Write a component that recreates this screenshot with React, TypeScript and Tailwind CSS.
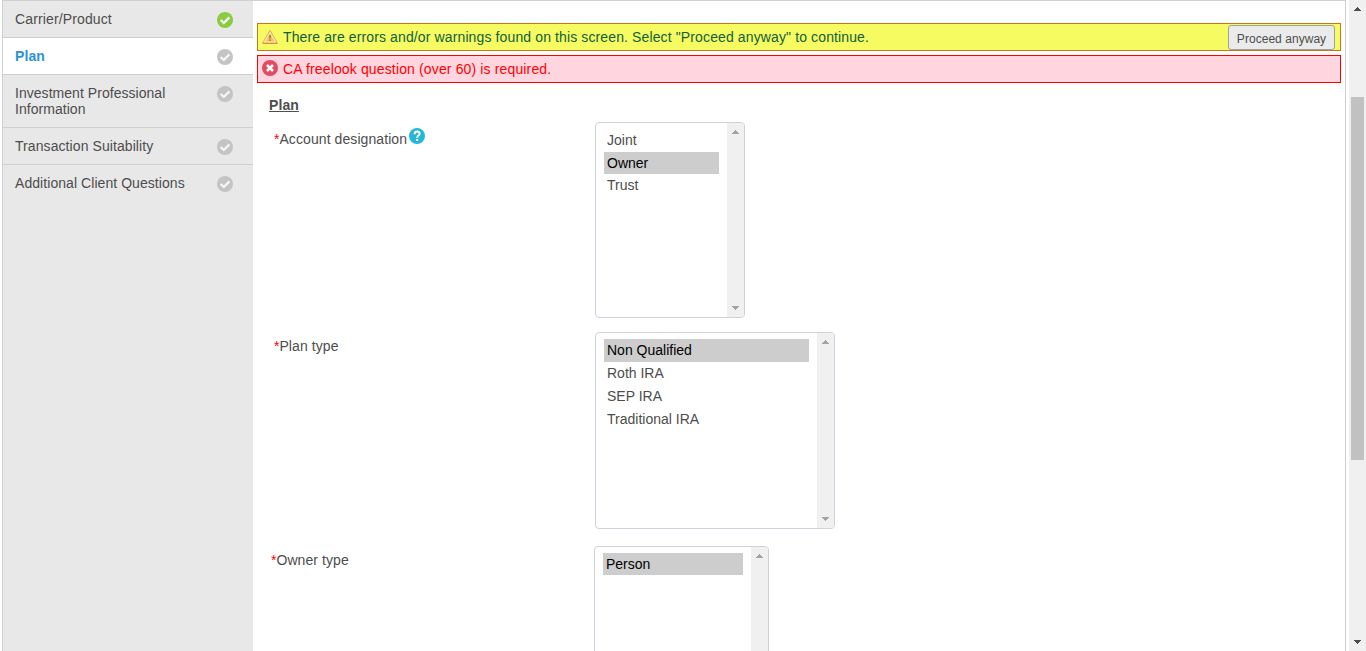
import React from "react";

function CheckBadge({ done }: { done?: boolean }) {
  return (
    <svg className="block h-4 w-4 shrink-0" viewBox="0 0 16 16">
      <circle cx="8" cy="8" r="8" fill={done ? "#8bcb3f" : "#c4c4c4"} />
      <path d="M3.7 8 L6.8 11 L12.4 5.4" fill="none" stroke={done ? "#fff" : "#f6f6f6"} strokeWidth="2.3" />
    </svg>
  );
}

function Arrow({ down, color }: { down?: boolean; color: string }) {
  return (
    <svg className="block h-1 w-[7px]" viewBox="0 0 7 4" shapeRendering="crispEdges">
      <path
        d={down ? "M0 0H7V1H6V2H5V3H4V4H3V3H2V2H1V1H0Z" : "M3 0H4V1H5V2H6V3H7V4H0V3H1V2H2V1H3Z"}
        fill={color}
      />
    </svg>
  );
}

type Step = { label: string; row: string; text: string; done?: boolean };

const steps: Step[] = [
  { label: "Carrier/Product", row: "h-[37px]", text: "tracking-[0.13px]", done: true },
  { label: "Plan", row: "h-[37px] bg-white", text: "font-bold text-[#2a93d8] tracking-[0.1px]" },
  { label: "Investment Professional Information", row: "h-[53px]", text: "tracking-[0.04px]" },
  { label: "Transaction Suitability", row: "h-[37px]", text: "tracking-[0.08px]" },
  { label: "Additional Client Questions", row: "h-[37px] border-transparent", text: "tracking-[0.06px]" },
];

function Sidebar() {
  return (
    <nav className="w-[251px] shrink-0 border-l border-[#d0d0d0] bg-[#e8e8e8]">
      {steps.map((s) => (
        <div key={s.label} className={`flex items-start border-b border-[#cfcfcf] pl-3 pr-5 ${s.row}`}>
          <span className={`w-[190px] pt-[10px] leading-4 ${s.text}`}>{s.label}</span>
          <span className="ml-auto pt-[11px]">
            <CheckBadge done={s.done} />
          </span>
        </div>
      ))}
    </nav>
  );
}

type ListProps = { box: string; options: { label: string; row: string }[]; selected: string };

function ListBox({ box, options, selected }: ListProps) {
  return (
    <div className={`flex shrink-0 overflow-hidden rounded-[4px] border border-[#cfd2da] bg-white ${box}`}>
      <ul className="grow pl-2 pr-2 pt-1.5">
        {options.map((o) => (
          <li
            key={o.label}
            className={`pl-[3px] ${o.row} ${o.label === selected ? "bg-[#cdcdcd] text-black" : ""}`}
          >
            {o.label}
          </li>
        ))}
      </ul>
      <div className="flex w-[17px] shrink-0 flex-col items-center justify-between bg-[#f0f0f0] py-[7px]">
        <Arrow color="#a3a3a3" />
        <Arrow down color="#a3a3a3" />
      </div>
    </div>
  );
}

function Label({ text, className, help }: { text: string; className: string; help?: boolean }) {
  return (
    <div className={`flex shrink-0 leading-4 ${className}`}>
      <span className="text-[#f00]">*</span>
      <span className="tracking-[0.08px]">{text}</span>
      {help && (
        <svg className="mt-[-3px] ml-[2px] block h-4 w-4" viewBox="0 0 16 16">
          <circle cx="8" cy="8" r="8" fill="#25b7d9" />
          <path d="M5.6 6.3 C5.5 2.5 10.7 2.7 10.6 5.8 C10.5 7.5 8.1 7.6 8.1 9.8" fill="none" stroke="#fff" strokeWidth="2.1" />
          <rect x="7" y="10.9" width="2.2" height="2.1" fill="#fff" />
        </svg>
      )}
    </div>
  );
}

export default function App() {
  return (
    <div className="flex h-[651px] w-[1366px] overflow-hidden bg-white font-['Liberation_Sans',Arial,sans-serif] text-[14px] text-[#4d4d4d]">
      <div className="ml-[2px] flex w-[1344px] border-r border-t border-[#d0d0d0]">
        <Sidebar />
        <main className="flex grow flex-col pl-1 pr-1 pt-[22px]">
          <div className="flex h-7 shrink-0 items-center border border-[#cb7613] bg-[#f7fb62] pl-1 pr-[5px] text-[#12603a]">
            <svg className="mt-[-1px] block h-4 w-4" viewBox="0 0 16 16">
              <path d="M8 1.5 L15.3 14 H0.7 Z" fill="#fff3d0" stroke="#eab558" strokeWidth="1.2" strokeLinejoin="round" />
              <path d="M8 4.2 L12.7 12.4 H3.3 Z" fill="#f3c45c" />
              <path d="M0.8 14.4H15.2" stroke="#d38a2c" strokeWidth="1" />
              <path d="M8 6v3.6M8 10.6v1.4" stroke="#a8782a" strokeWidth="1.5" />
            </svg>
            <span className="ml-[5px] whitespace-nowrap tracking-[0.122px]">
              There are errors and/or warnings found on this screen. Select "Proceed anyway" to continue.
            </span>
            <button className="ml-auto mt-px h-[25px] w-[107px] whitespace-nowrap rounded-[3px] border border-[#9da0a8] bg-[#ebebeb] text-[12px] tracking-[0.04px] text-[#4d4d4d]">
              <span className="relative top-px">Proceed anyway</span>
            </button>
          </div>
          <div className="mt-1 flex h-7 shrink-0 items-center border border-[#f00] bg-[#ffd5e0] pl-1 text-[#f00]">
            <svg className="mt-[-3px] block h-4 w-4" viewBox="0 0 16 16">
              <circle cx="8" cy="8" r="8" fill="#e04c60" />
              <path d="M5 5 L11 11 M11 5 L5 11" stroke="#fff" strokeWidth="2.5" />
            </svg>
            <span className="ml-[5px] tracking-[0.14px]">CA freelook question (over 60) is required.</span>
          </div>
          <h2 className="ml-3 mt-[14px] shrink-0 font-bold leading-4 tracking-[0.08px] underline">Plan</h2>
          <div className="mt-[9px] flex h-[210px] shrink-0">
            <Label help text="Account designation" className="w-[338px] pl-[17px] pt-[9px]" />
            <ListBox
              box="h-[196px] w-[150px]"
              selected="Owner"
              options={[
                { label: "Joint", row: "h-[23px] leading-[23px]" },
                { label: "Owner", row: "h-[22px] leading-[23px]" },
                { label: "Trust", row: "h-[23px] leading-[23px]" },
              ]}
            />
          </div>
          <div className="flex h-[214px] shrink-0">
            <Label text="Plan type" className="w-[338px] pl-[17px] pt-[6px]" />
            <ListBox
              box="h-[197px] w-[240px]"
              selected="Non Qualified"
              options={[
                { label: "Non Qualified", row: "h-[23px] leading-[23px]" },
                { label: "Roth IRA", row: "h-[23px] leading-[23px]" },
                { label: "SEP IRA", row: "h-[23px] leading-[23px]" },
                { label: "Traditional IRA", row: "h-[23px] leading-[23px]" },
              ]}
            />
          </div>
          <div className="flex h-[196px] shrink-0">
            <Label text="Owner type" className="w-[337px] pl-[14px] pt-[6px]" />
            <ListBox
              box="h-[196px] w-[175px]"
              selected="Person"
              options={[{ label: "Person", row: "h-[22px] leading-[23px]" }]}
            />
          </div>
        </main>
      </div>
      <div className="ml-[3px] flex w-[17px] flex-col items-center bg-[#f0f0f0] pt-[7px] pb-[7px]">
        <Arrow color="#4d4d4d" />
        <div className="mt-[86px] h-[363px] w-[13px] bg-[#c1c1c1]" />
        <div className="mt-auto">
          <Arrow down color="#4d4d4d" />
        </div>
      </div>
    </div>
  );
}
